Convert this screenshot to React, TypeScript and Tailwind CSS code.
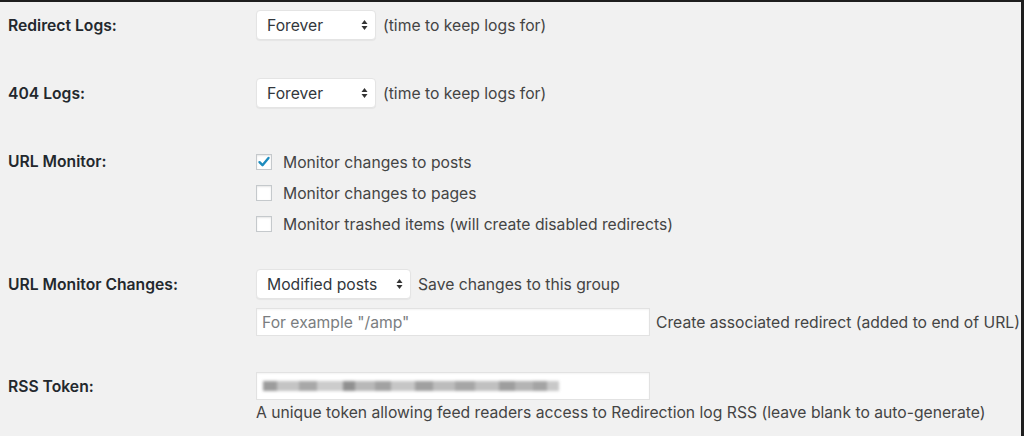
import React from "react";

function Select({ value, w }: { value: string; w: string }) {
  return (
    <div
      className={`${w} h-[30px] flex items-center justify-between bg-white rounded-[4px] border border-[#e4e4e4] shadow-[0_1px_1px_rgba(0,0,0,0.05)] pl-[10px] pr-[7px] text-[#32373c]`}
    >
      <span className="pt-[2px]">{value}</span>
      <svg width="7" height="12" viewBox="0 0 7 12">
        <path d="M3.5 1 L6.5 5 L0.5 5 Z" fill="#333" />
        <path d="M3.5 11 L6.5 7 L0.5 7 Z" fill="#333" />
      </svg>
    </div>
  );
}

function Checkbox({ checked }: { checked?: boolean }) {
  return (
    <div className="w-[16px] h-[16px] bg-white border border-[#c5c9cc] shadow-[inset_0_1px_2px_rgba(0,0,0,0.1)] flex items-center justify-center shrink-0">
      {checked && (
        <svg width="14" height="14" viewBox="0 0 14 14">
          <path d="M2.5 7.2 L5.5 10.2 L11.5 3" stroke="#1e8cbe" strokeWidth="2.4" fill="none" strokeLinecap="round" strokeLinejoin="round" />
        </svg>
      )}
    </div>
  );
}

function Label({ children, h = "h-[30px]" }: { children: React.ReactNode; h?: string }) {
  return (
    <div className={`w-[256px] shrink-0 pl-[8px] pt-[2px] ${h} flex items-center font-semibold text-[#23282d]`}>
      {children}
    </div>
  );
}

const blocks: [string, string][] = [
  ["w-[14px]", "bg-[#9c9c9c]"],
  ["w-[22px]", "bg-[#c4c4c4]"],
  ["w-[18px]", "bg-[#a8a8a8]"],
  ["w-[26px]", "bg-[#cccccc]"],
  ["w-[12px]", "bg-[#909090]"],
  ["w-[20px]", "bg-[#b8b8b8]"],
  ["w-[16px]", "bg-[#a2a2a2]"],
  ["w-[24px]", "bg-[#c6c6c6]"],
  ["w-[18px]", "bg-[#a0a0a0]"],
  ["w-[22px]", "bg-[#bcbcbc]"],
  ["w-[20px]", "bg-[#a6a6a6]"],
  ["w-[24px]", "bg-[#c0c0c0]"],
  ["w-[16px]", "bg-[#9e9e9e]"],
  ["w-[18px]", "bg-[#b4b4b4]"],
  ["w-[14px]", "bg-[#a4a4a4]"],
  ["w-[12px]", "bg-[#c8c8c8]"],
];

export default function App() {
  return (
    <div className="w-[1024px] h-[436px] overflow-hidden bg-[#f1f1f1] border-t-2 border-r-[3px] border-[#1e1e1e] font-[Inter,sans-serif] text-[15.7px] text-[#444]">
      <div className="pt-[8px] flex flex-col">
        {/* Redirect Logs */}
        <div className="flex">
          <Label>Redirect Logs:</Label>
          <div className="flex items-center gap-[7px]">
            <Select value="Forever" w="w-[120px]" />
            <span className="pt-[2px]">(time to keep logs for)</span>
          </div>
        </div>

        {/* 404 Logs */}
        <div className="flex mt-[38px]">
          <Label>404 Logs:</Label>
          <div className="flex items-center gap-[7px]">
            <Select value="Forever" w="w-[120px]" />
            <span className="pt-[2px]">(time to keep logs for)</span>
          </div>
        </div>

        {/* URL Monitor */}
        <div className="flex mt-[38px]">
          <Label h="h-[29px]">URL Monitor:</Label>
          <div className="flex flex-col">
            <label className="h-[31px] flex items-center gap-[11px]">
              <Checkbox checked />
              <span className="pt-[2px]">Monitor changes to posts</span>
            </label>
            <label className="h-[31px] flex items-center gap-[11px]">
              <Checkbox />
              <span className="pt-[2px]">Monitor changes to pages</span>
            </label>
            <label className="h-[31px] flex items-center gap-[11px]">
              <Checkbox />
              <span className="pt-[2px]">Monitor trashed items (will create disabled redirects)</span>
            </label>
          </div>
        </div>

        {/* URL Monitor Changes */}
        <div className="flex mt-[30px]">
          <Label>URL Monitor Changes:</Label>
          <div className="flex flex-col gap-[9px]">
            <div className="flex items-center gap-[7px]">
              <Select value="Modified posts" w="w-[155px]" />
              <span className="whitespace-nowrap pt-[2px]">Save changes to this group</span>
            </div>
            <div className="flex items-center gap-[6px]">
              <div className="w-[394px] h-[28px] shrink-0 bg-white border border-[#e2e2e2] shadow-[inset_0_1px_2px_rgba(0,0,0,0.05)] flex items-center px-[5px] pt-[2px] text-[#7a7d80]">
                For example "/amp"
              </div>
              <span className="whitespace-nowrap pt-[2px]">Create associated redirect (added to end of URL)</span>
            </div>
          </div>
        </div>

        {/* RSS Token */}
        <div className="flex mt-[36px]">
          <Label h="h-[28px]">RSS Token:</Label>
          <div className="flex flex-col">
            <div className="w-[394px] h-[28px] bg-white border border-[#e2e2e2] shadow-[inset_0_1px_2px_rgba(0,0,0,0.05)] flex items-center px-[6px] overflow-hidden">
              <div className="flex items-center blur-[1.5px]">
                {blocks.map(([w, c], i) => (
                  <span key={i} className={`${w} ${c} h-[10px] inline-block`} />
                ))}
              </div>
            </div>
            <div className="mt-[2px] pt-[2px] h-[20px] flex items-center whitespace-nowrap">
              A unique token allowing feed readers access to Redirection log RSS (leave blank to auto-generate)
            </div>
          </div>
        </div>
      </div>
    </div>
  );
}
